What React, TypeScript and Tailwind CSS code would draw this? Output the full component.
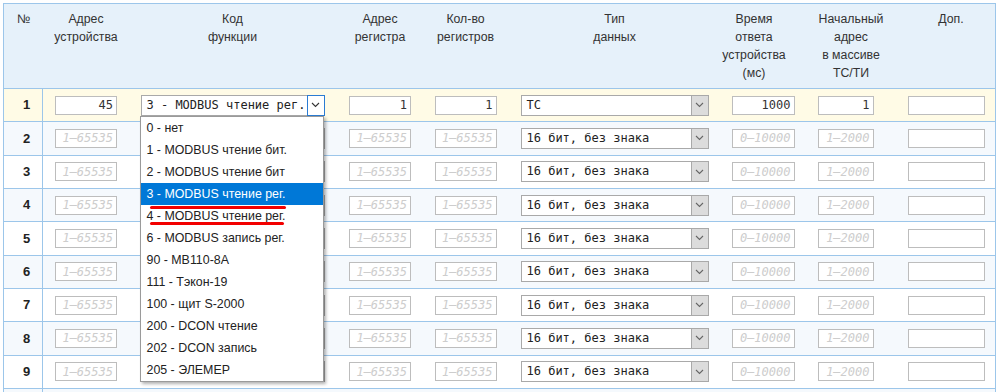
import React from 'react';

const grid = 'grid grid-cols-[39px_86px_207px_88px_83px_215px_82px_83px_108px]';
const mono = "font-['DejaVu_Sans_Mono',monospace]";

const functions = [
  '0 - нет',
  '1 - MODBUS чтение бит.',
  '2 - MODBUS чтение бит',
  '3 - MODBUS чтение рег.',
  '4 - MODBUS чтение рег.',
  '6 - MODBUS запись рег.',
  '90 - МВ110-8А',
  '111 - Тэкон-19',
  '100 - щит S-2000',
  '200 - DCON чтение',
  '202 - DCON запись',
  '205 - ЭЛЕМЕР',
];

function Chevron({ dark }: { dark?: boolean }) {
  return (
    <svg width="9" height="6" viewBox="0 0 9 6" className="block">
      <polyline points="1,1 4.5,4.5 8,1" fill="none" stroke={dark ? '#333' : '#666'} strokeWidth="1.1" />
    </svg>
  );
}

function FakeSelect({ value, wide, focused }: { value: string; wide?: boolean; focused?: boolean }) {
  return (
    <div
      className={`flex h-[21px] items-stretch border border-[#a9a9a9] bg-white ${wide ? 'w-[188px]' : 'w-[184px]'}`}
    >
      <span className={`flex-1 truncate pl-[5px] text-[12px] leading-[19px] text-[#222] ${mono}`}>{value}</span>
      {focused ? (
        <span className="-my-px -mr-px flex w-[18px] items-center justify-center border border-[#2b7cd3] bg-white">
          <Chevron dark />
        </span>
      ) : (
        <span className="flex w-[17px] items-center justify-center border-l border-[#a9a9a9] bg-[#dcdcdc]">
          <Chevron />
        </span>
      )}
    </div>
  );
}

function Field({ value, placeholder, w }: { value?: string; placeholder?: string; w: string }) {
  return (
    <input
      readOnly
      value={value ?? ''}
      placeholder={placeholder}
      className={`h-[19px] ${w} border border-[#bdbdbd] bg-white px-[3px] text-right text-[12px] text-[#333] outline-none placeholder:italic placeholder:text-[#cdcdcd] ${mono}`}
    />
  );
}

function Dropdown() {
  return (
    <div className="absolute left-[-1px] top-full z-20 w-[184px] border border-[#9a9a9a] bg-white shadow-[2px_2px_3px_rgba(0,0,0,0.3)]">
      {functions.map((f, i) => (
        <div
          key={f + i}
          className={`h-[22px] pl-[6px] text-[12.4px] leading-[22px] ${i === 3 ? 'bg-[#0078d7] text-white' : 'text-[#222]'}`}
        >
          {f}
        </div>
      ))}
      {/* red marks drawn over the list */}
      <div className="absolute left-[9px] top-[89px] h-[3px] w-[136px] rounded-full bg-[#f20000]" />
      <div className="absolute left-[9px] top-[105px] h-[3px] w-[134px] rounded-full bg-[#f20000]" />
    </div>
  );
}

function Row({ n }: { n: number }) {
  const first = n === 1;
  const bg = first ? 'bg-[#fffbe6]' : n % 2 === 0 ? 'bg-[#f5f9fd]' : 'bg-white';
  const cell = 'flex items-center justify-center';
  return (
    <div className={`${grid} h-[33.33px] border-b border-[#9cc6ea] ${bg}`}>
      <div className={`${cell} border-r border-[#9cc6ea] pl-[7px] text-[13px] font-bold text-[#222]`}>{n}</div>
      <div className={cell}>
        <Field w="w-[62px]" value={first ? '45' : undefined} placeholder="1–65535" />
      </div>
      <div className={cell}>
        <div className="relative">
          {/* rows below the open list keep their select, hidden by the list */}
          <FakeSelect value={first ? '3 - MODBUS чтение рег.' : ''} focused={first} />
          {first && <Dropdown />}
        </div>
      </div>
      <div className={cell}>
        <Field w="w-[62px]" value={first ? '1' : undefined} placeholder="1–65535" />
      </div>
      <div className={cell}>
        <Field w="w-[62px]" value={first ? '1' : undefined} placeholder="1–65535" />
      </div>
      <div className={cell}>
        <FakeSelect wide value={first ? 'ТС' : '16 бит, без знака'} />
      </div>
      <div className={cell}>
        <Field w="w-[63px]" value={first ? '1000' : undefined} placeholder="0–10000" />
      </div>
      <div className={cell}>
        <Field w="w-[56px]" value={first ? '1' : undefined} placeholder="1–2000" />
      </div>
      <div className="flex items-center pl-[21px]">
        <Field w="w-[77px]" />
      </div>
    </div>
  );
}

export default function App() {
  const head = 'pt-[6px] text-center leading-[18px]';
  return (
    <div className="h-[392px] overflow-hidden bg-white p-[3px] font-['Liberation_Sans',Arial,sans-serif] text-[12.3px] text-[#333]">
      <div className="w-[993px] border border-[#9cc6ea]">
        <div className={`${grid} h-[85px] border-b border-[#9cc6ea] bg-[#e6f1fa]`}>
          <div className={head}>№</div>
          <div className={head}>
            Адрес
            <br />
            устройства
          </div>
          <div className={head}>
            Код
            <br />
            функции
          </div>
          <div className={head}>
            Адрес
            <br />
            регистра
          </div>
          <div className={head}>
            Кол-во
            <br />
            регистров
          </div>
          <div className={head}>
            Тип
            <br />
            данных
          </div>
          <div className={`${head} pr-[18px]`}>
            Время
            <br />
            ответа
            <br />
            устройства
            <br />
            (мс)
          </div>
          <div className={`${head} pl-[11px]`}>
            Начальный
            <br />
            адрес
            <br />
            в массиве
            <br />
            ТС/ТИ
          </div>
          <div className={`${head} pl-[20px]`}>Доп.</div>
        </div>
        {[1, 2, 3, 4, 5, 6, 7, 8, 9].map((n) => (
          <Row key={n} n={n} />
        ))}
        {/* next row, only its top edge is on screen */}
        <div className={`${grid} h-[33.33px] bg-[#f5f9fd]`}>
          <div className="border-r border-[#9cc6ea]" />
        </div>
      </div>
    </div>
  );
}
